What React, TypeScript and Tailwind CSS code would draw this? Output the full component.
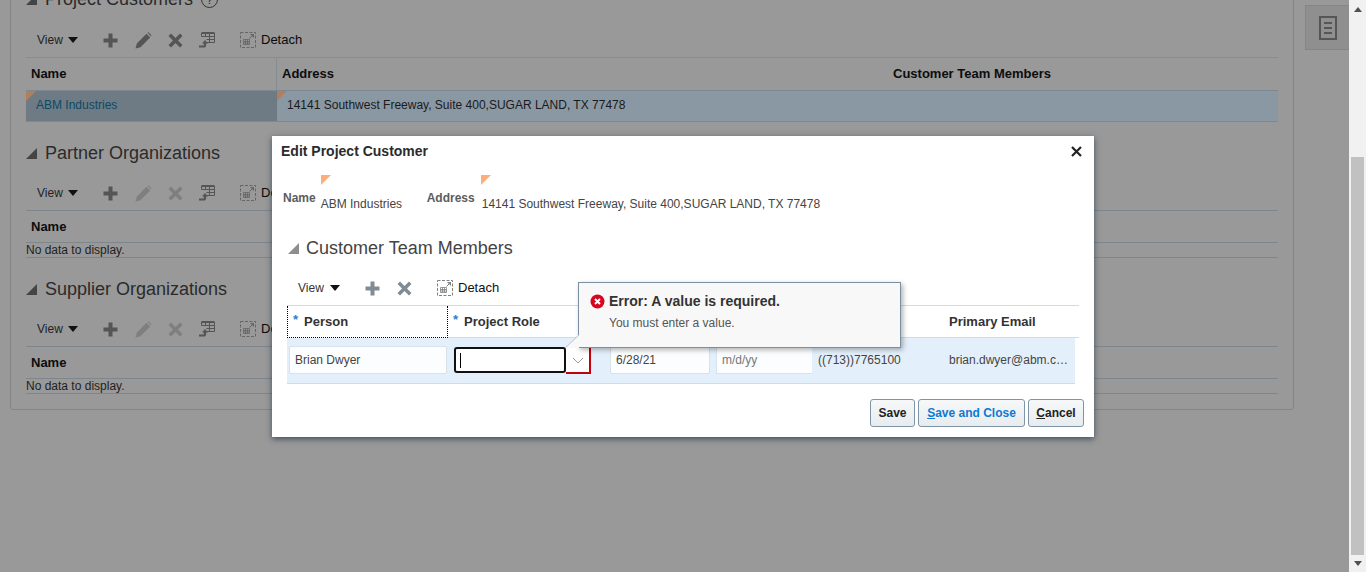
import React from "react";

const Plus = ({ c = "#555" }: { c?: string }) => (
  <svg width="15" height="15" viewBox="0 0 15 15" className="block"><path d="M5.500 0.500h4v5h5v4h-5v5h-4v-5h-5v-4h5z" fill={c} /></svg>
);
const Cross = ({ c = "#555" }: { c?: string }) => (
  <svg width="15" height="15" viewBox="0 0 15 15" className="block"><path d="M0.500 3L3 0.500 7.500 5 12 0.500 14.500 3 10 7.500 14.500 12 12 14.500 7.500 10 3 14.500 0.500 12 5 7.500z" fill={c} /></svg>
);
const Pencil = ({ c = "#555" }: { c?: string }) => (
  <svg width="17" height="17" viewBox="0 0 17 17" className="block"><path d="M0.500 16.500l1.300-5L11.500 1.800l3.700 3.700-9.700 9.700zM12.500 0.800l1-0.600 3 3-0.600 1z" fill={c} /></svg>
);
const Freeze = ({ c = "#555" }: { c?: string }) => (
  <svg width="16" height="16" viewBox="0 0 16 16" className="block" fill="none" stroke={c}>
    <path d="M2.500 1h13" strokeWidth="2" />
    <path d="M2.500 1v3.500M15.500 1v9.500H7.500M2.500 4.500h13M7.500 7.500h8M6.500 1v4M10.500 1v9.500" />
    <path d="M0 14.500h4.500q1.500 0 1.500-1.500v-2" strokeWidth="2.200" />
    <path d="M3 11.500l3-3.500 3 3.500z" fill={c} stroke="none" />
  </svg>
);
const DetachIcon = ({ c = "#666" }: { c?: string }) => (
  <svg width="16" height="16" viewBox="0 0 16 16" className="block" fill="none" stroke={c}>
    <rect x=".5" y=".5" width="15" height="15" strokeDasharray="3 1.500" />
    <path d="M9.500 6.500L13 3" />
    <path d="M10 2h4v4z" fill={c} stroke="none" />
    <path d="M3.500 7.500h6v5h-6zM3.500 9.500h6M3.500 11h6M5.500 7.500v5M7.500 7.500v5" strokeWidth=".8" />
  </svg>
);
const Triangle = ({ c = "#444" }: { c?: string }) => (
  <svg width="11" height="11" viewBox="0 0 11 11" className="block"><path d="M11 0v11H0z" fill={c} /></svg>
);
const Corner = ({ c }: { c: string }) => (
  <svg width="10" height="10" viewBox="0 0 10 10" className="block"><path d="M0 0h10L0 10z" fill={c} /></svg>
);
const Caret = () => (
  <svg width="10" height="6" viewBox="0 0 10 6" className="block"><path d="M0 0h10L5 6z" fill="#111" /></svg>
);

function Toolbar({ disabled }: { disabled?: boolean }) {
  const off = disabled ? "#7f7f7f" : "#555";
  return (
    <div className="flex h-[34px] items-center pl-[11px]">
      <span className="w-[31px] text-[#222]">View</span>
      <Caret />
      <span className="ml-[25px]"><Plus /></span>
      <span className="ml-[17px]"><Pencil c={off} /></span>
      <span className="ml-[16px]"><Cross c={off} /></span>
      <span className="ml-[16px]"><Freeze /></span>
      <span className="ml-[25px]"><DetachIcon /></span>
      <span className="ml-[5px] pb-[1px] text-[13px] leading-none text-[#0a0a0a]">Detach</span>
    </div>
  );
}

function EmptySection({ title }: { title: string }) {
  return (
    <section className="mt-[19px]">
      <h2 className="flex h-[24px] items-center gap-[8px] text-[18px] text-[#2b2b2b]"><Triangle />{title}</h2>
      <div className="mt-[11px]"><Toolbar disabled /></div>
      <div className="h-[33px] border-y border-[#7d868d] pl-[5px] pt-[8px] text-[13px] font-bold leading-[15px] text-[#0d0d0d]">Name</div>
      <div className="h-[15px] border-b border-[#7d868d] leading-[14px] text-[#1f1f1f]">No data to display.</div>
    </section>
  );
}

function Background() {
  return (
    <div className="flex w-[1349px] items-start bg-[#999999] pl-[10px]">
      <div className="mt-[-15px] h-[425px] w-[1284px] rounded-b-[3px] border border-[#858585] pl-[15px] pr-[15px]">
        <h2 className="flex h-[24px] items-center gap-[8px] pt-[3px] text-[18px] text-[#2b2b2b]">
          <Triangle />Project Customers
          <span className="ml-0 flex h-[17px] w-[17px] items-center justify-center rounded-full border border-[#333] text-[12px] leading-none">?</span>
        </h2>
        <div className="mt-[13px]"><Toolbar /></div>
        <div className="grid h-[33px] grid-cols-[251px_616px_1fr] border-t border-[#858d94] text-[13px] font-bold text-[#0d0d0d]">
          <div className="border-r border-[#858d94] pl-[5px] pt-[6px]">Name</div>
          <div className="pl-[5px] pt-[6px]">Address</div>
          <div className="pl-0 pt-[6px]">Customer Team Members</div>
        </div>
        <div className="grid h-[32px] grid-cols-[251px_1fr] border-b border-[#7d8890] bg-[#8a98a3] leading-[28px]">
          <div className="relative border-t border-[#7d8890] bg-[#6e7b85] pl-[10px] text-[#0a4a66]">
            <span className="absolute left-0 top-0"><Corner c="#b0805e" /></span>ABM Industries
          </div>
          <div className="relative border-t border-[#7d8890] pl-[10px] text-[#1a1a1a]">
            <span className="absolute left-0 top-0"><Corner c="#b0805e" /></span>14141 Southwest Freeway, Suite 400,SUGAR LAND, TX 77478
          </div>
        </div>
        <EmptySection title="Partner Organizations" />
        <EmptySection title="Supplier Organizations" />
      </div>
      <div className="mt-[5px] ml-[11px] flex h-[45px] w-[44px] items-center justify-center border-y border-l border-[#858585] bg-[#8f8f8f]">
        <svg width="18" height="24" viewBox="0 0 18 24" fill="none"><rect x="1" y="1" width="16" height="22" stroke="#555" strokeWidth="2" /><path d="M5 7h8M5 12h8M5 17h8" stroke="#555" strokeWidth="2" /></svg>
      </div>
    </div>
  );
}

function Scrollbar() {
  return (
    <div className="relative h-full w-[17px] bg-[#f1f1f1]">
      <svg width="8" height="5" viewBox="0 0 8 5" className="absolute left-[5px] top-[7px]"><path d="M0 5L4 0 8 5z" fill="#505050" /></svg>
      <div className="absolute left-[2px] top-[157px] h-[398px] w-[13px] bg-[#c1c1c1]" />
      <svg width="8" height="5" viewBox="0 0 8 5" className="absolute left-[5px] top-[561px]"><path d="M0 0L4 5 8 0z" fill="#505050" /></svg>
    </div>
  );
}

function ActionButton({ children, width, color = "text-[#222]" }: { children: React.ReactNode; width: string; color?: string }) {
  return (
    <button className={`h-[28px] rounded-[3px] border border-[#7e95a8] bg-gradient-to-b from-[#f6f8f9] to-[#e8ecef] font-bold ${width} ${color}`}>
      {children}
    </button>
  );
}

function Modal() {
  return (
    <div className="absolute left-[272px] top-[136px] h-[301px] w-[822px] bg-white pl-[9px] pt-[7px] text-[#333] shadow-[0_2px_6px_rgba(40,60,80,0.8)]">
      <div className="flex h-[16px] items-center justify-between pr-[12px]">
        <span className="text-[14px] font-bold text-[#2b2b2b]">Edit Project Customer</span>
        <svg width="11" height="11" viewBox="0 0 11 11"><path d="M1 1l9 9M10 1l-9 9" stroke="#222" strokeWidth="2.200" /></svg>
      </div>
      <div className="mt-[16px] flex h-[37px] pl-[2px]">
        <span className="mt-[14px] font-bold text-[#5c5c5c]">Name</span>
        <div className="relative ml-[5px] w-[106px] pt-[20px] text-[#444]">
          <span className="absolute left-0 top-0"><Corner c="#ffae7a" /></span>ABM Industries
        </div>
        <span className="mt-[14px] font-bold text-[#5c5c5c]">Address</span>
        <div className="relative ml-[6px] pt-[20px] text-[#444]">
          <span className="absolute left-0 top-0"><Corner c="#ffae7a" /></span>
          <span className="ml-[1px]">14141 Southwest Freeway, Suite 400,SUGAR LAND, TX 77478</span>
        </div>
      </div>
      <h2 className="mt-[24px] flex h-[24px] items-center gap-[7px] pl-[7px] text-[18px] text-[#444]"><Triangle c="#8e8e8e" />Customer Team Members</h2>
      <div className="mt-[11px] flex h-[34px] items-center pl-[17px]">
        <span className="w-[32px] text-[#333]">View</span>
        <Caret />
        <span className="ml-[25px]"><Plus c="#808b93" /></span>
        <span className="ml-[17px]"><Cross c="#808b93" /></span>
        <span className="ml-[25px]"><DetachIcon c="#808080" /></span>
        <span className="ml-[5px] pb-[1px] text-[13px] leading-none text-[#111]">Detach</span>
      </div>
      <div className="ml-[6px] w-[792px]">
        <div className="grid h-[33px] grid-cols-[161px_501px_1fr] border-t border-[#d3dbe2] text-[13px] font-bold text-[#333]">
          <div className="relative border-x border-b border-dotted border-black pl-[16px] pt-[6px]"><span className="absolute left-[5px] top-[4px] text-[#2a7fc9]">*</span>Person</div>
          <div className="relative border-b border-[#d3dbe2] pl-[16px] pt-[6px]"><span className="absolute left-[5px] top-[4px] text-[#2a7fc9]">*</span>Project Role</div>
          <div className="border-b border-[#d3dbe2] pl-0 pt-[6px]">Primary Email</div>
        </div>
        <div className="flex h-[46px] w-[788px] items-center border-b border-[#d3dbe2] bg-[#e3f0fb] pb-[1px] text-[#444]">
          <div className="ml-[2px] flex h-[28px] w-[158px] items-center rounded-[2px] border border-[#d8e2ea] bg-[#fbfdff] pl-[5px]">Brian Dwyer</div>
          <div className="ml-[7px] flex h-[28px] w-[137px] items-stretch">
            <div className="flex h-[26px] w-[112px] items-center self-center rounded-[3px] border-2 border-[#111] bg-white pl-[4px]"><span className="h-[15px] w-px bg-black" /></div>
            <div className="flex w-[25px] items-center justify-center border-r-2 border-b-2 border-t-2 border-[#c4000a] bg-white">
              <svg width="12" height="7" viewBox="0 0 12 7" fill="none"><path d="M1 1l5 5 5-5" stroke="#9a9a9a" /></svg>
            </div>
          </div>
          <div className="ml-[19px] flex h-[28px] w-[100px] items-center rounded-[2px] border border-[#d8e2ea] bg-[#fbfdff] pl-[5px]">6/28/21</div>
          <div className="ml-[6px] flex h-[28px] w-[96px] items-center border border-r-0 border-[#d8e2ea] bg-[#fbfdff] pl-[5px] text-[#777]">m/d/yy</div>
          <span className="ml-[6px] w-[131px]">((713))7765100</span>
          <span className="w-[120px] truncate">brian.dwyer@abm.com</span>
        </div>
      </div>
      <div className="mt-[15px] flex justify-end gap-[3px] pr-[10px]">
        <ActionButton width="w-[45px]">Save</ActionButton>
        <ActionButton width="w-[107px]" color="text-[#0f78d0]"><span className="underline">S</span>ave and Close</ActionButton>
        <ActionButton width="w-[56px]"><span className="underline">C</span>ancel</ActionButton>
      </div>
      <div className="absolute left-[306px] top-[146px] h-[66px] w-[323px] border border-[#7b8fa3] bg-[#f8f8f8] pl-[11px] pt-[10px] shadow-[2px_2px_5px_rgba(0,0,0,0.3)]">
        <div className="flex h-[16px] items-center gap-[4px] text-[14px] font-bold text-[#333]">
          <svg width="15" height="15" viewBox="0 0 15 15" className="block"><circle cx="7.500" cy="7.500" r="7" fill="#d8051f" /><path d="M5 5l5 5M10 5l-5 5" stroke="#fff" strokeWidth="2" /></svg>
          Error: A value is required.
        </div>
        <div className="mt-[7px] pl-[19px] leading-[14px] text-[#555]">You must enter a value.</div>
        <svg width="14" height="13" viewBox="0 0 14 13" className="absolute bottom-[-1px] left-[-14px]"><path d="M14 0v13H0z" fill="#f8f8f8" /><path d="M14 0L0 13" stroke="#b9c4ce" /></svg>
      </div>
    </div>
  );
}

export default function App() {
  return (
    <div className="relative flex h-[572px] w-[1366px] overflow-hidden bg-[#999999] font-['Liberation_Sans',Arial,sans-serif] text-[12px]">
      <Background />
      <Scrollbar />
      <Modal />
    </div>
  );
}
